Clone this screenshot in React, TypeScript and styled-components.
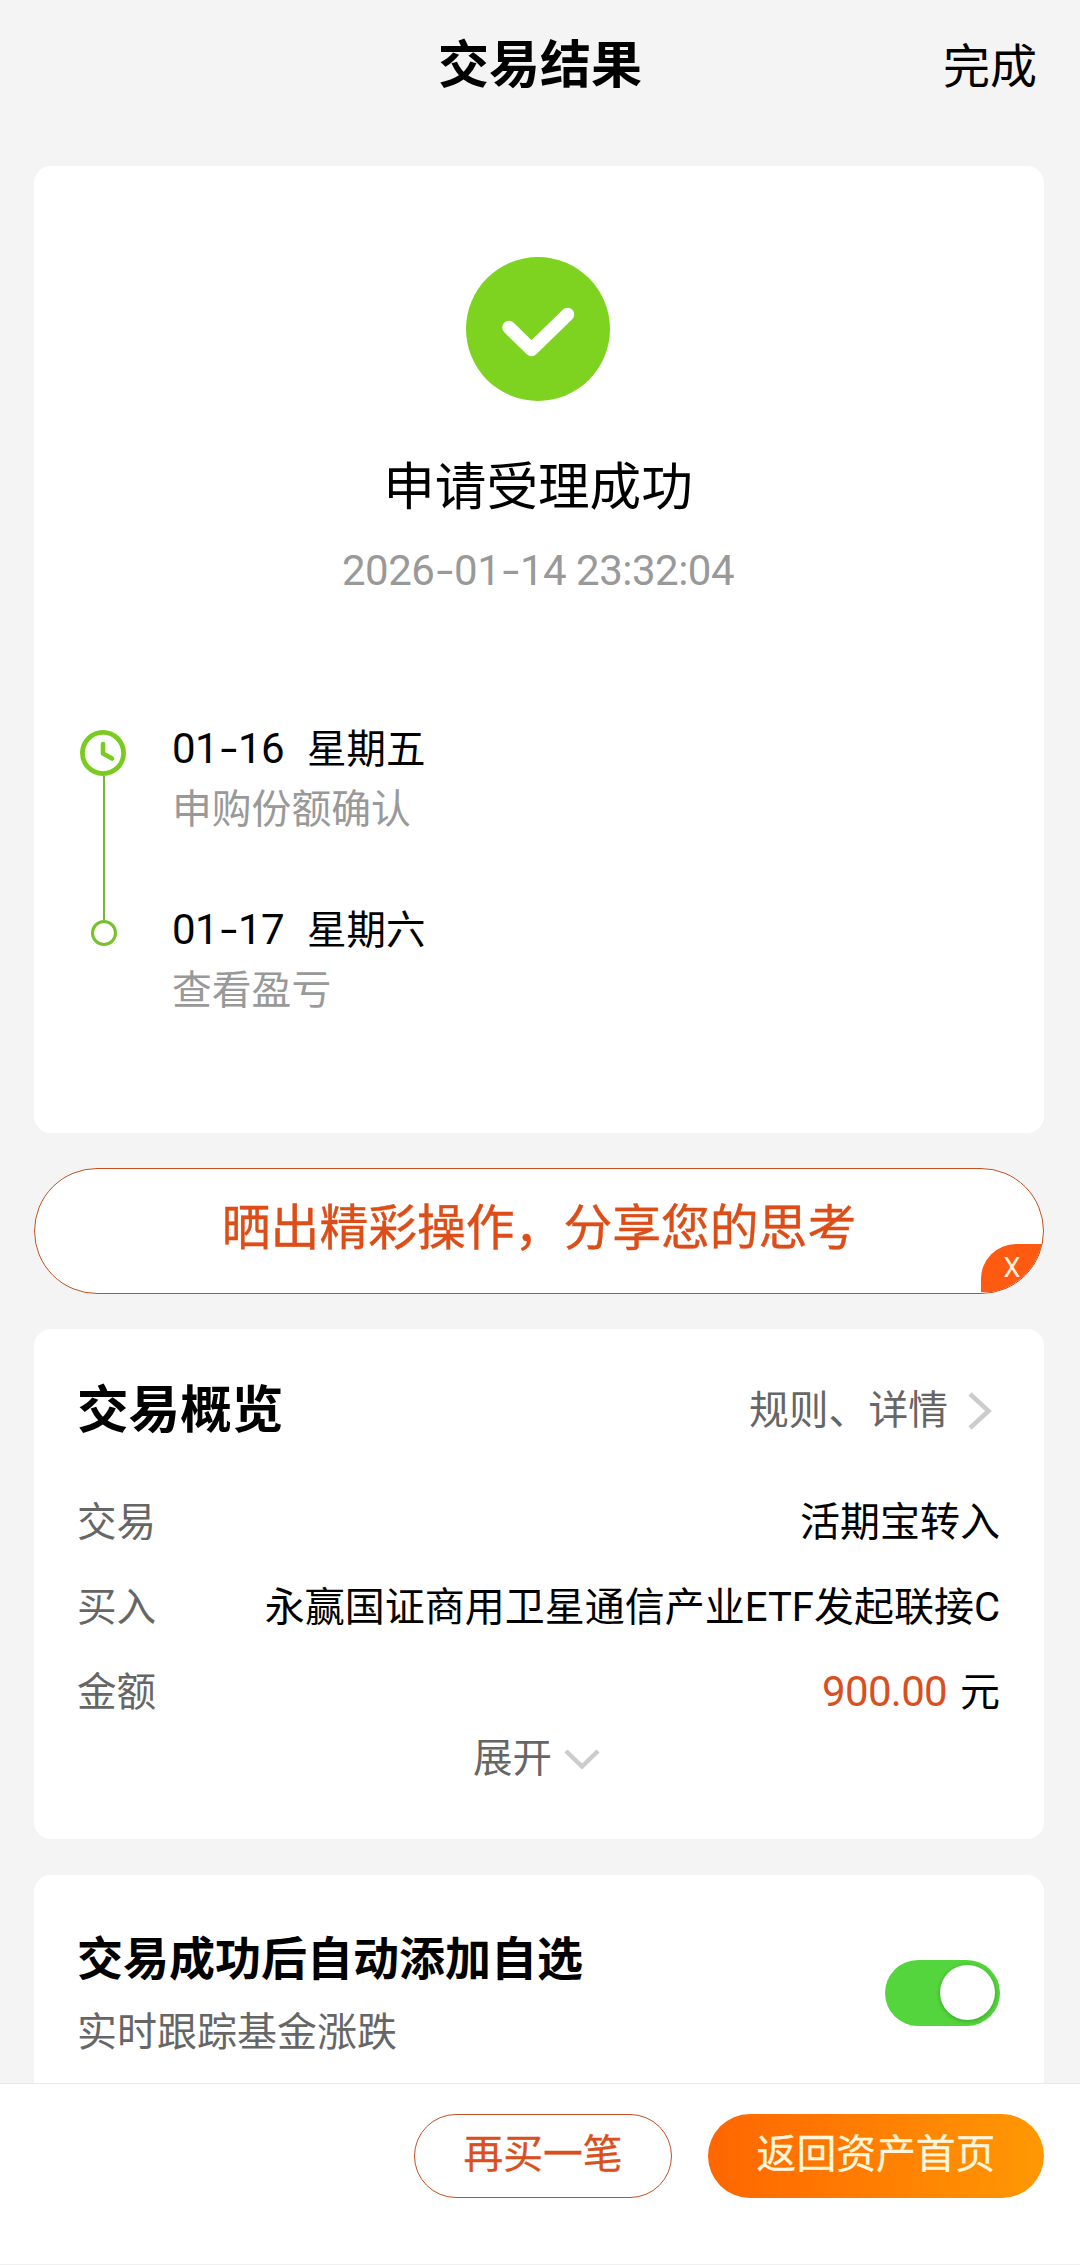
import React, { useState } from 'react';
import styled, { createGlobalStyle } from 'styled-components';

const GlobalStyle = createGlobalStyle`
  * { box-sizing: border-box; }
  body {
    margin: 0;
    background: #f4f4f4;
    color: #000;
    font-family: Roboto, "Noto Sans CJK SC", sans-serif;
    font-size: 40px;
    line-height: 60px;
  }
  button { font-family: inherit; line-height: inherit; margin: 0; padding: 0; border: 0; background: none; }
`;

const Page = styled.div`
  width: 1080px;
  height: 2265px;
  display: flex;
  flex-direction: column;
  overflow: hidden;
  background: #f4f4f4;
`;

const Header = styled.header`
  flex: none;
  height: 166px;
  padding: 28px 43px 0;
  display: grid;
  grid-template-columns: 1fr auto 1fr;
  align-items: start;
`;

const PageTitle = styled.h1`
  grid-column: 2;
  margin: 0;
  font-size: 51px;
  line-height: 76px;
  font-weight: 700;
`;

const DoneButton = styled.button`
  justify-self: end;
  font-size: 47px;
  line-height: 78px;
  color: #000;
`;

const Content = styled.main`
  flex: 1;
  min-height: 0;
  overflow: hidden;
  padding: 0 36px 0 34px;
  display: flex;
  flex-direction: column;
`;

const Card = styled.section`
  flex: none;
  background: #fff;
  border-radius: 17px;
`;

const ResultCard = styled(Card)`
  height: 967px;
  padding: 91px 2px 0 0;
  display: flex;
  flex-direction: column;
  align-items: center;
`;

const ResultTitle = styled.h2`
  margin: 49px 0 0;
  font-size: 51.6px;
  line-height: 76px;
  font-weight: 400;
`;

const ResultTime = styled.div`
  margin-top: 15px;
  font-size: 42px;
  letter-spacing: -0.5px;
  color: #999;
`;

const Dash = styled.span`
  display: inline-block;
  margin: 0 4.3px;
  transform: scaleX(1.45);
`;

const Timeline = styled.div`
  align-self: stretch;
  margin-top: 118px;
  padding-left: 45px;
  display: flex;
`;

const TimelineRail = styled.div`
  width: 48px;
  padding-top: 11px;
  display: flex;
  flex-direction: column;
  align-items: center;
`;

const RailLine = styled.div`
  width: 2px;
  height: 144px;
  margin-left: 1px;
  background: #76b93a;
`;

const RailDot = styled.div`
  width: 26px;
  height: 26px;
  margin-left: 1px;
  border: 3px solid #78c02c;
  border-radius: 50%;
`;

const TimelineSteps = styled.div`
  padding-left: 45px;
  display: flex;
  flex-direction: column;
  gap: 60px;
`;

const StepDate = styled.div`
  display: flex;
  align-items: baseline;
  gap: 24px;
  font-size: 39.5px;
  white-space: nowrap;
`;

const StepDay = styled.span`
  font-size: 42px;
  letter-spacing: -0.5px;
  width: 111px;
`;

const StepNote = styled.div`
  font-size: 39.8px;
  color: #999;
`;

const ShareBanner = styled.div`
  position: relative;
  flex: none;
  height: 126px;
  margin: 35px 0;
  padding-bottom: 4px;
  border: 1px solid #c4501f;
  border-radius: 63px;
  background: #fff;
  overflow: hidden;
  display: flex;
  align-items: center;
  justify-content: center;
  font-size: 48.8px;
  color: #dc4d17;
  -webkit-text-stroke: 0.4px #dc4d17;
`;

const DismissButton = styled.button`
  position: absolute;
  right: -1px;
  bottom: 1px;
  width: 63px;
  height: 48px;
  padding-right: 1px;
  border-radius: 35px 0 0 0;
  background: #ff5a12;
  color: #fff1dc;
  font-size: 27px;
  line-height: 48px;
  text-align: center;
  -webkit-text-stroke: 0;
`;

const OverviewCard = styled(Card)`
  height: 510px;
  padding: 44px 44px 0 43px;
`;

const OverviewHead = styled.div`
  display: flex;
  align-items: center;
  justify-content: space-between;
  height: 76px;
  margin-bottom: 31px;
`;

const SectionTitle = styled.h3<{ $size: number }>`
  margin: 0;
  font-size: ${(p) => p.$size}px;
  line-height: 76px;
  font-weight: 700;
`;

const DetailLink = styled.button`
  display: flex;
  align-items: center;
  gap: 20px;
  padding-right: 8px;
  font-size: 39.8px;
  color: #666;
`;

const InfoRow = styled.div`
  height: 85px;
  display: flex;
  align-items: center;
  justify-content: space-between;
  white-space: nowrap;
`;

const InfoLabel = styled.span`
  font-size: 39.6px;
  color: #666;
`;

const InfoValue = styled.span`
  display: flex;
  align-items: baseline;
  gap: 13px;
`;

const Amount = styled.span`
  font-size: 42px;
  letter-spacing: -0.7px;
  color: #d8501f;
`;

const ExpandButton = styled.button`
  width: 100%;
  height: 48px;
  padding-right: 4px;
  display: flex;
  align-items: center;
  justify-content: center;
  gap: 12px;
  font-size: 39.5px;
  color: #666;
`;

const FavoriteCard = styled(Card)`
  height: 300px;
  margin-top: 36px;
  padding: 46px 44px 0 43px;
  display: flex;
  justify-content: space-between;
`;

const FavoriteNote = styled.div`
  margin-top: 6px;
  color: #666;
`;

const Toggle = styled.button<{ $on: boolean }>`
  width: 115px;
  height: 66px;
  margin-top: 39px;
  padding: 0 5px 1px;
  border-radius: 33px;
  background: ${(p) => (p.$on ? '#54d53d' : '#ddd')};
  display: flex;
  align-items: center;
  justify-content: ${(p) => (p.$on ? 'flex-end' : 'flex-start')};
`;

const ToggleKnob = styled.span`
  width: 55px;
  height: 55px;
  border-radius: 50%;
  background: #fff;
  box-shadow: 0 1px 4px rgba(0, 60, 0, 0.35);
`;

const Footer = styled.footer`
  flex: none;
  height: 182px;
  padding: 30px 36px 0;
  border-top: 1px solid #e9e9e9;
  border-bottom: 1px solid #f0f0f0;
  background: #fff;
  display: flex;
  justify-content: flex-end;
  align-items: flex-start;
  gap: 36px;
`;

const PillButton = styled.button<{ $primary?: boolean }>`
  width: ${(p) => (p.$primary ? 336 : 258)}px;
  height: 84px;
  padding-bottom: 2px;
  border-radius: 42px;
  border: ${(p) => (p.$primary ? '0' : '1px solid #c4501f')};
  background: ${(p) => (p.$primary ? 'linear-gradient(90deg, #ff6600, #ff9804)' : '#fff')};
  color: ${(p) => (p.$primary ? '#fff6dc' : '#d9501e')};
  font-size: 39.8px;
  -webkit-text-stroke: 0.3px currentColor;
`;

const SuccessIcon = () => (
  <svg width="144" height="144" viewBox="0 0 144 144">
    <circle cx="72" cy="72" r="72" fill="#7ed321" />
    <path d="M43 70.500L65.500 92.500L101.500 57.500" fill="none" stroke="#fff" strokeWidth="13.500" strokeLinecap="round" strokeLinejoin="round" />
  </svg>
);

const ClockIcon = () => (
  <svg width="46" height="46" viewBox="0 0 46 46">
    <circle cx="23" cy="23" r="20.600" fill="none" stroke="#7acb20" strokeWidth="4.800" />
    <path d="M23 14V23.500L32 28.500" fill="none" stroke="#7acb20" strokeWidth="4.600" strokeLinecap="round" strokeLinejoin="round" />
  </svg>
);

const ChevronRight = () => (
  <svg width="24" height="38" viewBox="0 0 24 38">
    <path d="M2 2L20.500 19L2 36" fill="none" stroke="#ccc" strokeWidth="4.500" />
  </svg>
);

const ChevronDown = () => (
  <svg width="36" height="20" viewBox="0 0 36 20">
    <path d="M2 2L18 17.500L34 2" fill="none" stroke="#ccc" strokeWidth="4.500" />
  </svg>
);

const DateText = ({ value }: { value: string }) => (
  <>
    {value.split('-').map((part, i) => (
      <React.Fragment key={i}>
        {i > 0 && <Dash>-</Dash>}
        {part}
      </React.Fragment>
    ))}
  </>
);

const steps = [
  { day: '01-16', weekday: '星期五', note: '申购份额确认' },
  { day: '01-17', weekday: '星期六', note: '查看盈亏' },
];

export default function App() {
  const [autoAdd, setAutoAdd] = useState(true);

  return (
    <Page>
      <GlobalStyle />
      <Header>
        <PageTitle>交易结果</PageTitle>
        <DoneButton>完成</DoneButton>
      </Header>

      <Content>
        <ResultCard>
          <SuccessIcon />
          <ResultTitle>申请受理成功</ResultTitle>
          <ResultTime>
            <DateText value="2026-01-14 23:32:04" />
          </ResultTime>
          <Timeline>
            <TimelineRail>
              <ClockIcon />
              <RailLine />
              <RailDot />
            </TimelineRail>
            <TimelineSteps>
              {steps.map((step) => (
                <div key={step.day}>
                  <StepDate>
                    <StepDay>
                      <DateText value={step.day} />
                    </StepDay>
                    <span>{step.weekday}</span>
                  </StepDate>
                  <StepNote>{step.note}</StepNote>
                </div>
              ))}
            </TimelineSteps>
          </Timeline>
        </ResultCard>

        <ShareBanner>
          晒出精彩操作，分享您的思考
          <DismissButton>X</DismissButton>
        </ShareBanner>

        <OverviewCard>
          <OverviewHead>
            <SectionTitle $size={51.6}>交易概览</SectionTitle>
            <DetailLink>
              规则、详情
              <ChevronRight />
            </DetailLink>
          </OverviewHead>
          <InfoRow>
            <InfoLabel>交易</InfoLabel>
            <InfoValue>活期宝转入</InfoValue>
          </InfoRow>
          <InfoRow>
            <InfoLabel>买入</InfoLabel>
            <InfoValue>永赢国证商用卫星通信产业ETF发起联接C</InfoValue>
          </InfoRow>
          <InfoRow>
            <InfoLabel>金额</InfoLabel>
            <InfoValue>
              <Amount>900.00</Amount>
              <span>元</span>
            </InfoValue>
          </InfoRow>
          <ExpandButton>
            展开
            <ChevronDown />
          </ExpandButton>
        </OverviewCard>

        <FavoriteCard>
          <div>
            <SectionTitle $size={46}>交易成功后自动添加自选</SectionTitle>
            <FavoriteNote>实时跟踪基金涨跌</FavoriteNote>
          </div>
          <Toggle $on={autoAdd} onClick={() => setAutoAdd(!autoAdd)}>
            <ToggleKnob />
          </Toggle>
        </FavoriteCard>
      </Content>

      <Footer>
        <PillButton>再买一笔</PillButton>
        <PillButton $primary>返回资产首页</PillButton>
      </Footer>
    </Page>
  );
}
